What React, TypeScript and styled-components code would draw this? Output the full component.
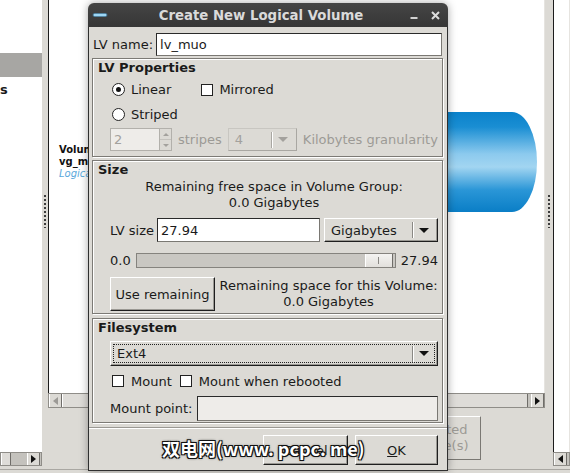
import React from "react";
import styled, { createGlobalStyle } from "styled-components";

const GlobalStyle = createGlobalStyle`
  html, body { margin: 0; padding: 0; }
  body {
    background: #dcdad5;
    font-family: "DejaVu Sans", "Noto Sans CJK SC", sans-serif;
    font-size: 13px;
    color: #1a1a1a;
  }
  * { box-sizing: border-box; }
`;

const Screen = styled.div`
  position: relative;
  width: 570px;
  height: 473px;
  overflow: hidden;
  background: #dcdad5;
  display: flex;
  flex-direction: column;
`;

/* ---------- background window ---------- */
const Panes = styled.div`
  display: flex;
  height: 466px;
  flex-shrink: 0;
`;

const Pane = styled.div<{ $width: number }>`
  width: ${(p) => p.$width}px;
  flex-shrink: 0;
  display: flex;
  flex-direction: column;
`;

const WhiteArea = styled.div<{ $borderLeft?: boolean; $height?: number }>`
  ${(p) => (p.$height ? `height: ${p.$height}px; flex-shrink: 0;` : "flex: 1;")}
  background: #fff;
  overflow: hidden;
  border-left: ${(p) => (p.$borderLeft ? "1px solid #1c1c1c" : "none")};
  border-right: ${(p) => (p.$borderLeft ? "1px solid #e6e4e0" : "none")};
`;

const Splitter = styled.div<{ $width: number }>`
  width: ${(p) => p.$width}px;
  flex-shrink: 0;
  display: flex;
  justify-content: center;
  padding-top: 195px;
  background: #dcdad5;
`;

const Grip = styled.div`
  width: 2px;
  height: 33px;
  background: repeating-linear-gradient(to bottom, #3c3c3c 0 2px, transparent 2px 4px);
`;

const TreeSelected = styled.div`
  margin-top: 53px;
  height: 24px;
  background: #a7a6a3;
`;

const TreeText = styled.div`
  line-height: 26px;
  font-weight: bold;
  white-space: nowrap;
`;

const HScroll = styled.div<{ $h: number }>`
  height: ${(p) => p.$h}px;
  flex-shrink: 0;
  display: flex;
  background: #c4c2bd;
  border: 1px solid #8f8d88;
`;

const ScrollThumb = styled.div<{ $w?: number }>`
  ${(p) => (p.$w ? `width: ${p.$w}px; flex-shrink: 0;` : "flex: 1;")}
  background: #dedcd8;
  border-left: 1px solid #fff;
  border-right: 1px solid #6f6d69;
`;

const ScrollTrough = styled.div<{ $w?: number }>`
  ${(p) => (p.$w ? `width: ${p.$w}px; flex-shrink: 0;` : "flex: 1;")}
`;

const ScrollArrow = styled.div<{ $dir: "left" | "right"; $disabled?: boolean }>`
  width: 13px;
  flex-shrink: 0;
  display: flex;
  align-items: center;
  justify-content: center;
  background: #dcdad5;
  border-left: 1px solid #fff;
  border-right: 1px solid #6f6d69;
  &::after {
    content: "";
    border-style: solid;
    border-width: ${(p) => (p.$dir === "right" ? "4px 0 4px 5px" : "4px 5px 4px 0")};
    border-color: ${(p) => {
      const c = p.$disabled ? "#9c9a96" : "#111";
      return p.$dir === "right"
        ? `transparent transparent transparent ${c}`
        : `transparent ${c} transparent transparent`;
    }};
  }
`;

const ListContent = styled.div`
  margin-top: 112px;
  height: 100px;
  display: flex;
  align-items: center;
  justify-content: space-between;
  padding: 0 6px 0 10px;
`;

const VgInfo = styled.div`
  display: flex;
  flex-direction: column;
  font-size: 10px;
  line-height: 12px;
  white-space: nowrap;
`;

const VgLine = styled.span<{ $italic?: boolean }>`
  font-weight: ${(p) => (p.$italic ? "normal" : "bold")};
  font-style: ${(p) => (p.$italic ? "italic" : "normal")};
  color: ${(p) => (p.$italic ? "#5aa9dc" : "#111")};
`;

const BgButtonRow = styled.div`
  flex: 1;
  display: flex;
  justify-content: flex-end;
  align-items: flex-start;
  padding: 8px 64px 0 0;
`;

const BgButton = styled.div`
  width: 140px;
  height: 44px;
  display: flex;
  flex-direction: column;
  align-items: center;
  justify-content: center;
  line-height: 16px;
  color: #9c9a96;
  background: #dcdad5;
  border: 1px solid;
  border-color: #fff #7a7873 #7a7873 #fff;
`;

const Footer = styled.div`
  margin-top: 3px;
  border-top: 1px solid #a9a7a2;
  flex: 1;
`;

/* ---------- dialog ---------- */
const Dialog = styled.div`
  position: absolute;
  left: 88px;
  top: 3px;
  width: 360px;
  height: 468px;
  display: flex;
  flex-direction: column;
  border-radius: 6px 6px 0 0;
  box-shadow: 0 0 9px rgba(0, 0, 0, 0.35);
  background: #dcdad5;
`;

const TitleBar = styled.div`
  height: 24px;
  flex-shrink: 0;
  display: flex;
  align-items: center;
  background: linear-gradient(#454545, #363636);
  border-radius: 6px 6px 0 0;
  color: #dadada;
  font-weight: bold;
  font-size: 13.3px;
`;

const TitleIcon = styled.div`
  width: 24px;
  display: flex;
  justify-content: center;
`;

const TitleText = styled.div`
  flex: 1;
  text-align: center;
  white-space: nowrap;
`;

const TitleControls = styled.div`
  display: flex;
  align-items: center;
  gap: 13px;
  padding-right: 8px;
`;

const Body = styled.div`
  flex: 1;
  display: flex;
  flex-direction: column;
  border: 1px solid #2f2f2f;
  border-top: none;
  padding: 6px 4px 0 3px;
`;

const FieldRow = styled.div<{ $mt?: number; $h: number; $gap: number }>`
  display: flex;
  align-items: center;
  margin-top: ${(p) => p.$mt ?? 0}px;
  height: ${(p) => p.$h}px;
  gap: ${(p) => p.$gap}px;
  flex-shrink: 0;
`;

const NameRow = styled(FieldRow)`
  padding: 0 1px;
`;

const Label = styled.span<{ $disabled?: boolean }>`
  white-space: nowrap;
  color: ${(p) => (p.$disabled ? "#9c9a96" : "#1a1a1a")};
`;

const Entry = styled.div<{ $w?: number; $insensitive?: boolean }>`
  ${(p) => (p.$w ? `width: ${p.$w}px; flex-shrink: 0;` : "flex: 1;")}
  height: 100%;
  display: flex;
  align-items: center;
  padding-left: 3px;
  background: ${(p) => (p.$insensitive ? "#eeece9" : "#fff")};
  border: 1px solid;
  border-color: #2a2a2a #7a7873 #7a7873 #2a2a2a;
  white-space: nowrap;
`;

const Frame = styled.div<{ $mt: number; $pb: number }>`
  margin-top: ${(p) => p.$mt}px;
  display: flex;
  flex-direction: column;
  padding: 0 4px ${(p) => p.$pb}px 17px;
  border: 1px solid #7c7a75;
  box-shadow: inset 1px 1px 0 #fff, 1px 1px 0 #fff;
  flex-shrink: 0;
`;

const FrameTitle = styled.div`
  font-weight: bold;
  line-height: 18px;
  margin-left: -12px;
`;

const Option = styled.label`
  display: flex;
  align-items: center;
  gap: 6px;
  padding-left: 2px;
  white-space: nowrap;
`;

const CheckOption = styled(Option)`
  gap: 7px;
`;

const RadioDot = styled.span<{ $checked?: boolean }>`
  width: 13px;
  height: 13px;
  border-radius: 50%;
  border: 1px solid #222;
  background: #fff;
  display: inline-flex;
  align-items: center;
  justify-content: center;
  &::after {
    content: "";
    width: 5px;
    height: 5px;
    border-radius: 50%;
    background: ${(p) => (p.$checked ? "#111" : "transparent")};
  }
`;

const CheckBox = styled.span`
  width: 12px;
  height: 12px;
  border: 1px solid #222;
  background: #fff;
  display: inline-block;
`;

const SpinBox = styled.div`
  width: 62px;
  height: 100%;
  flex-shrink: 0;
  display: flex;
  border: 1px solid #b2b0ab;
  background: #eeece9;
`;

const SpinValue = styled.div`
  flex: 1;
  display: flex;
  align-items: center;
  padding-left: 3px;
  color: #a3a19d;
`;

const SpinArrows = styled.div`
  width: 12px;
  display: flex;
  flex-direction: column;
  border-left: 1px solid #b2b0ab;
  background: #dcdad5;
`;

const SpinHalf = styled.div<{ $up?: boolean }>`
  flex: 1;
  display: flex;
  align-items: center;
  justify-content: center;
  border-bottom: ${(p) => (p.$up ? "1px solid #c4c2bd" : "none")};
  &::after {
    content: "";
    border-style: solid;
    border-width: ${(p) => (p.$up ? "0 3px 3px 3px" : "3px 3px 0 3px")};
    border-color: ${(p) =>
      p.$up ? "transparent transparent #a3a19d transparent" : "#a3a19d transparent transparent transparent"};
  }
`;

const Combo = styled.div<{ $w?: number; $disabled?: boolean; $ml?: number }>`
  ${(p) => (p.$w ? `width: ${p.$w}px; flex-shrink: 0;` : "flex: 1;")}
  margin-left: ${(p) => p.$ml ?? 0}px;
  height: 100%;
  display: flex;
  align-items: center;
  padding: 2px;
  background: #dcdad5;
  border: 1px solid;
  border-color: ${(p) => (p.$disabled ? "#c8c6c1 #a9a7a2 #a9a7a2 #c8c6c1" : "#fff #1e1e1e #1e1e1e #fff")};
  box-shadow: ${(p) => (p.$disabled ? "none" : "inset -1px -1px 0 #9a9893")};
  color: ${(p) => (p.$disabled ? "#a3a19d" : "#1a1a1a")};
`;

const ComboInner = styled.div<{ $focus?: boolean }>`
  flex: 1;
  height: 100%;
  display: flex;
  align-items: center;
  border: 1px ${(p) => (p.$focus ? "dotted #222" : "solid transparent")};
`;

const ComboText = styled.div`
  flex: 1;
  padding-left: 3px;
  white-space: nowrap;
`;

const ComboSep = styled.div<{ $disabled?: boolean }>`
  width: 2px;
  height: 16px;
  border-left: 1px solid ${(p) => (p.$disabled ? "#a9a7a2" : "#8a8884")};
  border-right: 1px solid #fff;
`;

const ComboArrow = styled.div<{ $disabled?: boolean }>`
  width: 20px;
  display: flex;
  justify-content: center;
  &::after {
    content: "";
    border-style: solid;
    border-width: 5px 5px 0 5px;
    border-color: ${(p) => (p.$disabled ? "#a3a19d" : "#111")} transparent transparent transparent;
  }
`;

const CenterText = styled.div<{ $grow?: boolean }>`
  ${(p) => (p.$grow ? "flex: 1;" : "")}
  display: flex;
  flex-direction: column;
  align-items: center;
  line-height: 16px;
  white-space: nowrap;
`;

const Trough = styled.div`
  flex: 1;
  height: 15px;
  display: flex;
  justify-content: flex-end;
  padding-right: 2px;
  background: #c9c7c2;
  border: 1px solid #85837e;
`;

const SliderThumb = styled.div`
  width: 28px;
  height: 100%;
  display: flex;
  align-items: center;
  justify-content: center;
  background: linear-gradient(#f4f3f1, #e2e0dc);
  border-left: 1px solid #fff;
  border-right: 1px solid #6f6d69;
  &::after {
    content: "";
    width: 1px;
    height: 7px;
    background: #8a8884;
  }
`;

const Button = styled.div<{ $w: number; $h: number }>`
  width: ${(p) => p.$w}px;
  height: ${(p) => p.$h}px;
  flex-shrink: 0;
  display: flex;
  align-items: center;
  justify-content: center;
  background: #dcdad5;
  border: 1px solid;
  border-color: #fff #1e1e1e #1e1e1e #fff;
  box-shadow: inset -1px -1px 0 #9a9893;
  white-space: nowrap;
`;

const Separator = styled.div`
  margin: 4px -4px 0 -3px;
  border-top: 1px solid #9a9893;
  border-bottom: 1px solid #fff;
`;

const ActionRow = styled.div`
  margin-top: 6px;
  display: flex;
  justify-content: flex-end;
  gap: 7px;
  padding-right: 5px;
`;

const Watermark = styled.div`
  position: absolute;
  left: 162px;
  top: 436px;
  font-family: "Noto Sans CJK SC", "DejaVu Sans", sans-serif;
  font-weight: bold;
  font-size: 18px;
  line-height: 24px;
  color: #fff;
  white-space: nowrap;
  text-shadow: 1px 1px 0 #111, -1px -1px 0 #111, 1px -1px 0 #111, -1px 1px 0 #111, 0 0 3px #000;
`;

const Cylinder = () => (
  <svg width="260" height="100" viewBox="0 0 260 100">
    <defs>
      <linearGradient id="cyl" x1="0" y1="0" x2="0" y2="1">
        <stop offset="0" stopColor="#0a82cb" />
        <stop offset="0.15" stopColor="#1a8ed3" />
        <stop offset="0.42" stopColor="#8ccaee" />
        <stop offset="0.55" stopColor="#a2d5f1" />
        <stop offset="0.78" stopColor="#2a96d7" />
        <stop offset="1" stopColor="#0a7ec6" />
      </linearGradient>
    </defs>
    <path d="M0,0 H234 A25,50 0 0 1 234,100 H0 Z" fill="url(#cyl)" />
  </svg>
);

export default function App() {
  return (
    <>
      <GlobalStyle />
      <Screen>
        <Panes>
          <Pane $width={42}>
            <WhiteArea>
              <TreeSelected />
              <TreeText>s</TreeText>
            </WhiteArea>
            <HScroll $h={14}>
              <ScrollThumb $w={10} />
              <ScrollTrough />
              <ScrollArrow $dir="right" />
              <ScrollTrough $w={1} />
            </HScroll>
          </Pane>
          <Splitter $width={6}>
            <Grip />
          </Splitter>
          <Pane $width={497}>
            <WhiteArea $borderLeft $height={393}>
              <ListContent>
                <VgInfo>
                  <VgLine>Volume Group</VgLine>
                  <VgLine>vg_muo</VgLine>
                  <VgLine $italic>Logical View</VgLine>
                </VgInfo>
                <Cylinder />
              </ListContent>
            </WhiteArea>
            <HScroll $h={15}>
              <ScrollArrow $dir="left" $disabled />
              <ScrollThumb />
              <ScrollTrough $w={3} />
              <ScrollArrow $dir="right" />
            </HScroll>
            <BgButtonRow>
              <BgButton>
                <span>Remove Selected</span>
                <span>Logical Volume(s)</span>
              </BgButton>
            </BgButtonRow>
          </Pane>
          <Splitter $width={8}>
            <Grip />
          </Splitter>
          <Pane $width={17}>
            <WhiteArea $borderLeft />
            <HScroll $h={14}>
              <ScrollArrow $dir="left" />
              <ScrollTrough />
            </HScroll>
          </Pane>
        </Panes>
        <Footer />

        <Dialog>
          <TitleBar>
            <TitleIcon>
              <svg width="16" height="8" viewBox="0 0 16 8">
                <rect x="0.5" y="2" width="15" height="4" rx="2" fill="#3e86b4" opacity="0.6" />
                <rect x="1.5" y="2.8" width="13" height="2.4" rx="1.2" fill="#9dd6f4" />
              </svg>
            </TitleIcon>
            <TitleText>Create New Logical Volume</TitleText>
            <TitleControls>
              <svg width="8" height="10" viewBox="0 0 8 10">
                <line x1="0.5" y1="8" x2="7.5" y2="8" stroke="#d2d2d2" strokeWidth="2" />
              </svg>
              <svg width="9" height="9" viewBox="0 0 9 9">
                <path d="M1 1 L8 8 M8 1 L1 8" stroke="#dcdcdc" strokeWidth="2" />
              </svg>
            </TitleControls>
          </TitleBar>
          <Body>
            <NameRow $h={23} $gap={3}>
              <Label>LV name:</Label>
              <Entry>lv_muo</Entry>
            </NameRow>

            <Frame $mt={2} $pb={5}>
              <FrameTitle>LV Properties</FrameTitle>
              <FieldRow $h={25} $gap={28}>
                <Option>
                  <RadioDot $checked />
                  Linear
                </Option>
                <Option>
                  <CheckBox />
                  Mirrored
                </Option>
              </FieldRow>
              <FieldRow $h={25} $gap={28}>
                <Option>
                  <RadioDot />
                  Striped
                </Option>
              </FieldRow>
              <FieldRow $mt={1} $h={23} $gap={6}>
                <SpinBox>
                  <SpinValue>2</SpinValue>
                  <SpinArrows>
                    <SpinHalf $up />
                    <SpinHalf />
                  </SpinArrows>
                </SpinBox>
                <Label $disabled>stripes</Label>
                <Combo $w={69} $disabled>
                  <ComboInner>
                    <ComboText>4</ComboText>
                    <ComboSep $disabled />
                    <ComboArrow $disabled />
                  </ComboInner>
                </Combo>
                <Label $disabled>Kilobytes granularity</Label>
              </FieldRow>
            </Frame>

            <Frame $mt={3} $pb={2}>
              <FrameTitle>Size</FrameTitle>
              <CenterText>
                <span>Remaining free space in Volume Group:</span>
                <span>0.0 Gigabytes</span>
              </CenterText>
              <FieldRow $mt={7} $h={24} $gap={3}>
                <Label>LV size</Label>
                <Entry $w={163}>27.94</Entry>
                <Combo $ml={1}>
                  <ComboInner>
                    <ComboText>Gigabytes</ComboText>
                    <ComboSep />
                    <ComboArrow />
                  </ComboInner>
                </Combo>
              </FieldRow>
              <FieldRow $mt={10} $h={17} $gap={5}>
                <Label>0.0</Label>
                <Trough>
                  <SliderThumb />
                </Trough>
                <Label>27.94</Label>
              </FieldRow>
              <FieldRow $mt={8} $h={34} $gap={4}>
                <Button $w={105} $h={34}>
                  Use remaining
                </Button>
                <CenterText $grow>
                  <span>Remaining space for this Volume:</span>
                  <span>0.0 Gigabytes</span>
                </CenterText>
              </FieldRow>
            </Frame>

            <Frame $mt={4} $pb={1}>
              <FrameTitle>Filesystem</FrameTitle>
              <FieldRow $mt={4} $h={25} $gap={0}>
                <Combo>
                  <ComboInner $focus>
                    <ComboText>Ext4</ComboText>
                    <ComboSep />
                    <ComboArrow />
                  </ComboInner>
                </Combo>
              </FieldRow>
              <FieldRow $mt={7} $h={16} $gap={6}>
                <CheckOption>
                  <CheckBox />
                  Mount
                </CheckOption>
                <CheckOption>
                  <CheckBox />
                  Mount when rebooted
                </CheckOption>
              </FieldRow>
              <FieldRow $mt={7} $h={25} $gap={5}>
                <Label>Mount point:</Label>
                <Entry $insensitive />
              </FieldRow>
            </Frame>

            <Separator />
            <ActionRow>
              <Button $w={85} $h={30}>
                Cancel
              </Button>
              <Button $w={83} $h={30}>
                <span>
                  <u>O</u>K
                </span>
              </Button>
            </ActionRow>
          </Body>
        </Dialog>
        <Watermark>双电网(www. pcpc. me)</Watermark>
      </Screen>
    </>
  );
}
